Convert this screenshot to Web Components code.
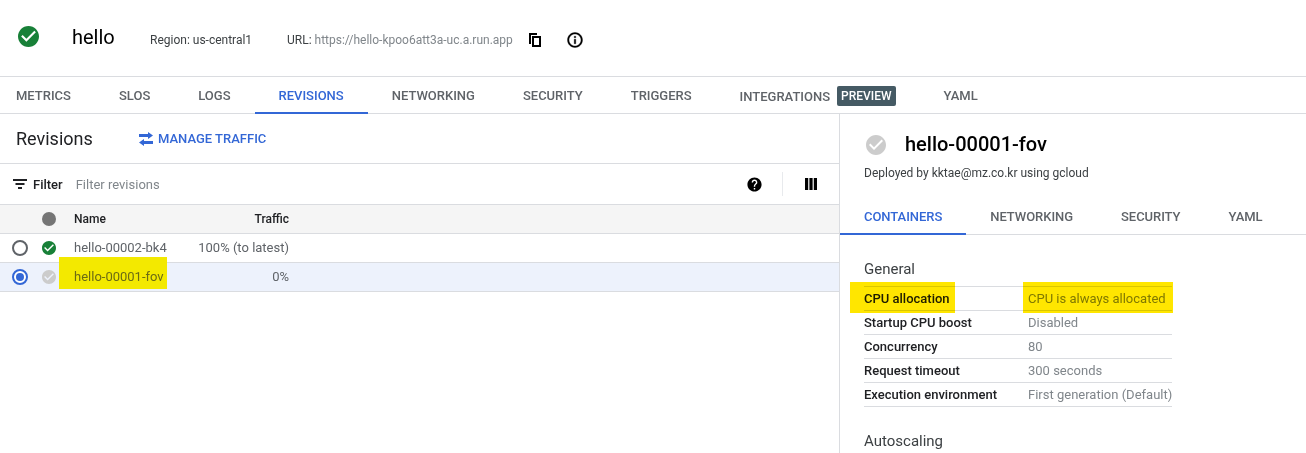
<!DOCTYPE html>
<html>
<head>
<meta charset="utf-8">
<title>hello</title>
<style>
  html, body { margin: 0; height: 100%; overflow: hidden; background: #fff; }
  body { font-family: Roboto, 'Liberation Sans', sans-serif; font-size: 13px; color: #202124; }
</style>
</head>
<body>
<svc-page></svc-page>

<script>
class StatusIcon extends HTMLElement {
  connectedCallback(){
    const size  = this.getAttribute('size') || 16;
    const color = this.getAttribute('color') || '#188038';
    this.attachShadow({ mode: 'open' }).innerHTML = `
      <style>:host { display: inline-flex; flex: none; } svg { display: block; }</style>
      <svg width="${size}" height="${size}" viewBox="2 2 20 20">
        <path fill="${color}" d="M12 2C6.480 2 2 6.480 2 12s4.480 10 10 10 10-4.480 10-10S17.520 2 12 2zm-2 15l-5-5 1.410-1.410L10 14.170l7.590-7.590L19 8l-9 9z"/>
      </svg>`;
  }
}

class TabBar extends HTMLElement {
  constructor(){
    super();
    this.attachShadow({ mode: 'open' }).innerHTML = `
      <style>
        :host { display: flex; height: 36px; border-bottom: 1px solid #dadce0; }
      </style>
      <slot></slot>`;
  }
}

class TabItem extends HTMLElement {
  constructor(){
    super();
    this.attachShadow({ mode: 'open' }).innerHTML = `
      <style>
        :host {
          display: flex;
          align-items: center;
          box-sizing: border-box;
          height: 37px;
          padding: 0 24px;
          font-size: 13px;
          font-weight: 500;
          color: #5f6368;
          white-space: nowrap;
        }
        :host([active]) { color: #3367d6; border-bottom: 2px solid #3367d6; padding-top: 2px; }
      </style>
      <slot></slot>`;
  }
}

class SvcHeader extends HTMLElement {
  constructor(){
    super();
    this.attachShadow({ mode: 'open' }).innerHTML = `
      <style>
        :host {
          display: flex;
          align-items: center;
          box-sizing: border-box;
          height: 77px;
          padding: 0 0 4px 18px;
          border-bottom: 1px solid #dadce0;
          font-size: 12px;
          color: #3c4043;
        }
        .name { margin-left: 33px; margin-top: 1px; font-size: 20px; color: #000; width: 78px; }
        .region { width: 137px; margin-top: 8px; }
        .url { margin-top: 8px; }
        .url b { font-weight: 400; color: #80868b; }
        svg { display: block; margin-top: 8px; }
        .copy { margin-left: 16px; }
        .info { margin-left: 25px; }
      </style>
      <status-icon size="21" color="#188038"></status-icon>
      <span class="name">hello</span>
      <span class="region">Region: us-central1</span>
      <span class="url">URL: <b>https://hello-kpoo6att3a-uc.a.run.app</b></span>
      <svg class="copy" width="12" height="14" viewBox="0 0 12 14"><path fill="#000" d="M0 0h8v2H2v9H0z"/><path fill="#000" fill-rule="evenodd" d="M3 3h9v11H3zM5 5v7h5V5z"/></svg>
      <svg class="info" width="18" height="18" viewBox="0 0 24 24"><path fill="#000" stroke="#000" stroke-width=".5" d="M11 7h2v2h-2zm0 4h2v6h-2zm1-9C6.480 2 2 6.480 2 12s4.480 10 10 10 10-4.480 10-10S17.520 2 12 2zm0 18c-4.410 0-8-3.590-8-8s3.590-8 8-8 8 3.590 8 8-3.590 8-8 8z"/></svg>`;
  }
}

class RevisionRow extends HTMLElement {
  connectedCallback(){
    const selected = this.hasAttribute('selected');
    this.attachShadow({ mode: 'open' }).innerHTML = `
      <style>
        :host {
          display: grid;
          grid-template-columns: 30px 32px 108px 107px;
          align-items: center;
          box-sizing: border-box;
          height: 29px;
          padding-left: 12px;
          border-bottom: 1px solid #dadce0;
          color: #5f6368;
          font-size: 13px;
          background: ${selected ? '#edf2fc' : '#fff'};
        }
        .radio {
          box-sizing: border-box;
          width: 16px; height: 16px;
          border-radius: 50%;
          border: 2px solid ${selected ? '#3367d6' : '#5f6368'};
          display: flex; align-items: center; justify-content: center;
          background: #fff;
        }
        .radio i { width: 8px; height: 8px; border-radius: 50%; background: ${selected ? '#3367d6' : 'transparent'}; }
        .name { white-space: nowrap; position: relative; z-index: 1; padding-bottom: 2px; ${selected ? 'color: #6b6b14;' : ''} }
        .traffic { text-align: right; white-space: nowrap; padding-bottom: 2px; }
      </style>
      <span class="radio"><i></i></span>
      <status-icon size="14" color="${this.getAttribute('color')}"></status-icon>
      <span class="name">${this.getAttribute('name')}</span>
      <span class="traffic">${this.getAttribute('traffic')}</span>`;
  }
}

class RevisionsPane extends HTMLElement {
  constructor(){
    super();
    this.attachShadow({ mode: 'open' }).innerHTML = `
      <style>
        :host { display: block; width: 839px; height: 339px; border-right: 1px solid #dadce0; position: relative; flex: none; }
        .top { display: flex; align-items: center; height: 49px; border-bottom: 1px solid #dadce0; padding-left: 16px; }
        h2 { margin: 0; font-size: 18px; font-weight: 400; color: #202124; width: 123px; }
        .manage { display: flex; align-items: center; gap: 5px; color: #3367d6; font-size: 13px; font-weight: 500; }
        .filter { display: flex; align-items: center; height: 40px; padding-left: 13px; border-bottom: 1px solid #dadce0; }
        .filter b { font-weight: 500; font-size: 13px; color: #202124; margin-left: 6px; }
        .filter span { margin-left: 13px; color: #80868b; font-size: 13px; }
        .tools { margin-left: auto; display: flex; align-items: center; height: 26px; }
        .help { margin-right: 19px; }
        .sep { width: 1px; height: 24px; background: #e8eaed; }
        .cols { margin: 0 22px 0 22px; }
        .head {
          display: grid;
          grid-template-columns: 42px 32px 100px 115px;
          align-items: center;
          height: 28px;
          background: #f5f5f5;
          border-bottom: 1px solid #dadce0;
          font-size: 12px;
          font-weight: 500;
          color: #202124;
        }
        .dot { grid-column: 2; width: 14px; height: 14px; border-radius: 50%; background: #757575; }
        .head .t { text-align: right; }
        .mark { position: absolute; z-index: 0; left: 59px; top: 143px; width: 108px; height: 32px; background: #f3e900; }
        svg { display: block; }
      </style>
      <div class="top">
        <h2>Revisions</h2>
        <div class="manage">
          <svg width="14" height="14" viewBox="0 0 14 14"><path fill="#3367d6" d="M9 0l5 3.500L9 7V5H0V2h9zM5 7v2h9v3H5v2L0 10.500z"/></svg>
          MANAGE TRAFFIC
        </div>
      </div>
      <div class="filter">
        <svg width="14" height="10" viewBox="0 0 14 10"><path fill="#202124" d="M0 0h14v2H0zM2.500 4h9v2h-9zM5 8h4v2H5z"/></svg>
        <b>Filter</b>
        <span>Filter revisions</span>
        <div class="tools">
          <svg class="help" width="17" height="17" viewBox="0 0 24 24"><path fill="#000" d="M12 2C6.480 2 2 6.480 2 12s4.480 10 10 10 10-4.480 10-10S17.520 2 12 2zm1 17h-2v-2h2v2zm2.070-7.750l-.9.920C13.450 12.900 13 13.500 13 15h-2v-.5c0-1.100.45-2.100 1.170-2.830l1.240-1.260c.37-.36.59-.86.59-1.410 0-1.100-.9-2-2-2s-2 .9-2 2H8c0-2.210 1.790-4 4-4s4 1.790 4 4c0 .88-.36 1.680-.93 2.250z"/></svg>
          <div class="sep"></div>
          <svg class="cols" width="12" height="12" viewBox="0 0 12 12"><path fill="#000" d="M0 0h3.200v12H0zM4.400 0h3.200v12H4.400zM8.800 0H12v12H8.800z"/></svg>
        </div>
      </div>
      <div class="head">
        <i class="dot"></i>
        <span class="n">Name</span>
        <span class="t">Traffic</span>
      </div>
      <slot></slot>
      <div class="mark"></div>`;
  }
}

class InfoRow extends HTMLElement {
  constructor(){
    super();
    this.attachShadow({ mode: 'open' }).innerHTML = `
      <style>
        :host {
          display: grid;
          grid-template-columns: 164px 1fr;
          align-items: center;
          height: 23px;
          border-bottom: 1px solid #dadce0;
          font-size: 13px;
          white-space: nowrap;
        }
        .k { font-weight: 500; color: #202124; }
        .v { color: #80868b; }
      </style>
      <span class="k"><slot name="k"></slot></span>
      <span class="v"><slot name="v"></slot></span>`;
  }
}

class DetailPane extends HTMLElement {
  constructor(){
    super();
    this.attachShadow({ mode: 'open' }).innerHTML = `
      <style>
        :host { display: block; flex: 1; position: relative; height: 339px; overflow: hidden; }
        .title { display: flex; align-items: center; height: 42px; padding: 9px 0 0 26px; }
        .title status-icon { margin-top: 2px; }
        h1 { margin: 0 0 0 19px; font-size: 20px; font-weight: 500; color: #000; }
        .by { padding-left: 24px; font-size: 12px; color: #3c4043; margin-top: -1px; height: 34px; line-height: 18px; }
        tab-bar { letter-spacing: -.05px; }
        .body { padding: 24px 0 0 24px; width: 308px; }
        h3 { margin: 0; font-size: 15px; font-weight: 400; color: #3c4043; line-height: 20px; }
        .rows { border-top: 1px solid #dadce0; margin-top: 7px; }
        .auto { margin-top: 24px; }
        .mark { position: absolute; top: 168px; height: 31px; background: #ffe600; mix-blend-mode: multiply; }
        .m1 { left: 10px; width: 105px; }
        .m2 { left: 183px; width: 150px; }
      </style>
      <div class="title">
        <status-icon size="20" color="#ccc"></status-icon>
        <h1>hello-00001-fov</h1>
      </div>
      <div class="by">Deployed by kktae@mz.co.kr using gcloud</div>
      <tab-bar>
        <tab-item active>CONTAINERS</tab-item>
        <tab-item>NETWORKING</tab-item>
        <tab-item>SECURITY</tab-item>
        <tab-item>YAML</tab-item>
      </tab-bar>
      <div class="body">
        <h3>General</h3>
        <div class="rows"><slot></slot></div>
        <h3 class="auto">Autoscaling</h3>
      </div>
      <div class="mark m1"></div>
      <div class="mark m2"></div>`;
  }
}

class SvcPage extends HTMLElement {
  constructor(){
    super();
    this.attachShadow({ mode: 'open' }).innerHTML = `
      <style>
        :host { display: block; }
        .panes { display: flex; }
        .main { margin-left: -8px; letter-spacing: -.005px; }
        .badge {
          display: inline-block;
          margin-left: 7px;
          padding: 0 4px;
          height: 20px;
          line-height: 20px;
          background: #455a64;
          color: #fff;
          border-radius: 2px;
          font-size: 12px;
        }
        tab-item.int { padding-top: 1px; }
      </style>
      <svc-header></svc-header>
      <tab-bar class="main">
        <tab-item>METRICS</tab-item>
        <tab-item>SLOS</tab-item>
        <tab-item>LOGS</tab-item>
        <tab-item active>REVISIONS</tab-item>
        <tab-item>NETWORKING</tab-item>
        <tab-item>SECURITY</tab-item>
        <tab-item>TRIGGERS</tab-item>
        <tab-item class="int">INTEGRATIONS<span class="badge">PREVIEW</span></tab-item>
        <tab-item>YAML</tab-item>
      </tab-bar>
      <div class="panes">
        <revisions-pane>
          <revision-row color="#188038" name="hello-00002-bk4" traffic="100% (to latest)"></revision-row>
          <revision-row selected color="#ccc" name="hello-00001-fov" traffic="0%"></revision-row>
        </revisions-pane>
        <detail-pane>
          <info-row><span slot="k">CPU allocation</span><span slot="v">CPU is always allocated</span></info-row>
          <info-row><span slot="k">Startup CPU boost</span><span slot="v">Disabled</span></info-row>
          <info-row><span slot="k">Concurrency</span><span slot="v">80</span></info-row>
          <info-row><span slot="k">Request timeout</span><span slot="v">300 seconds</span></info-row>
          <info-row><span slot="k">Execution environment</span><span slot="v">First generation (Default)</span></info-row>
        </detail-pane>
      </div>`;
  }
}

customElements.define('status-icon', StatusIcon);
customElements.define('tab-bar', TabBar);
customElements.define('tab-item', TabItem);
customElements.define('svc-header', SvcHeader);
customElements.define('revision-row', RevisionRow);
customElements.define('revisions-pane', RevisionsPane);
customElements.define('info-row', InfoRow);
customElements.define('detail-pane', DetailPane);
customElements.define('svc-page', SvcPage);
</script>
</body>
</html>
